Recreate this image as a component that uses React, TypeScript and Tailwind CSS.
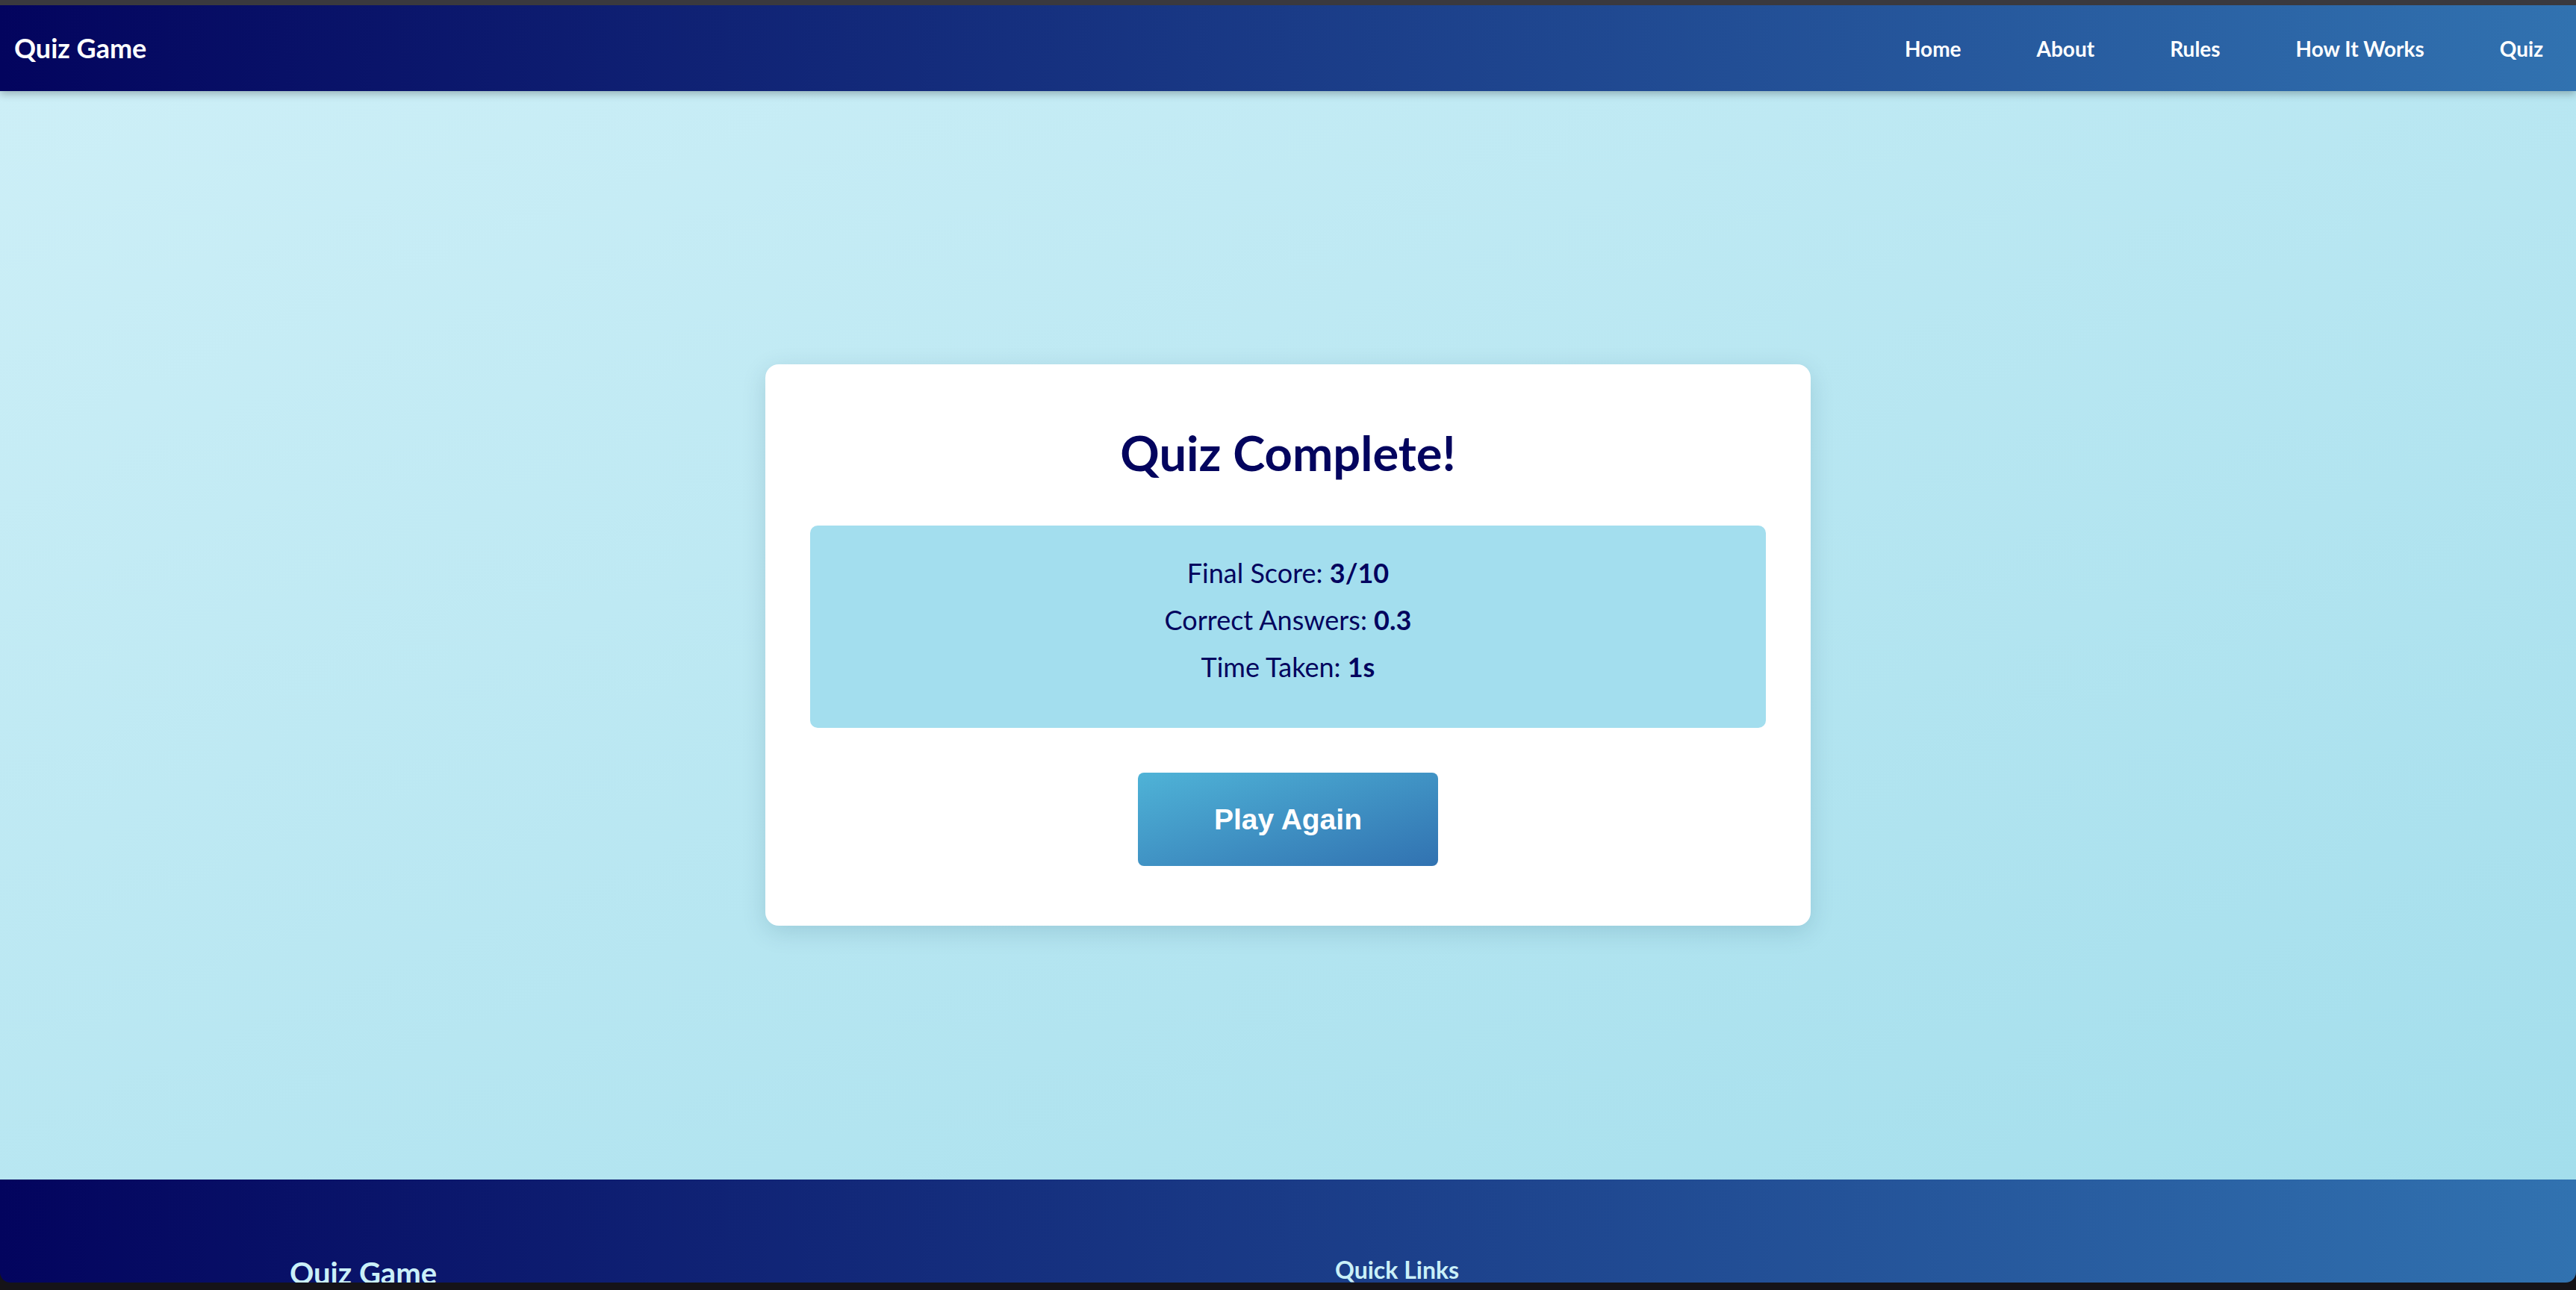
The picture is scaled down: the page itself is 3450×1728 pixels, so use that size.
const navLinks = ["Home", "About", "Rules", "How It Works", "Quiz"];

const stats = [
  { label: "Final Score", value: "3/10" },
  { label: "Correct Answers", value: "0.3" },
  { label: "Time Taken", value: "1s" },
];

export default function App() {
  return (
    <div className="h-[1728px] w-full overflow-hidden bg-[#151318] font-['Lato',sans-serif]">
      {/* window chrome */}
      <div className="h-[7px] bg-[#3a393e]" />

      <div className="h-[1711px] overflow-hidden rounded-b-[14px]">
        <header className="relative z-10 flex h-[115px] items-center justify-between bg-linear-to-r/srgb from-[#03045e] to-[#3172b0] pl-[19px] pr-[44px] shadow-[0_4px_10px_rgba(0,0,0,0.25)]">
          <h1 className="text-[36px] font-bold leading-[43px] text-white">Quiz Game</h1>
          <nav className="flex gap-[101px]">
            {navLinks.map((l) => (
              <a key={l} href="#" className="text-[28px] font-bold leading-[34px] text-white">
                {l}
              </a>
            ))}
          </nav>
        </header>

        <main className="flex h-[1458px] items-center justify-center bg-linear-to-br/srgb from-[#cdeff7] to-[#a3deec] pt-[26px]">
          <div className="flex w-[1400px] flex-col items-center rounded-[18px] bg-white px-[60px] pt-[80px] pb-[80px] shadow-[0_8px_32px_rgba(0,60,90,0.15)]">
            <h2 className="text-[65px] font-bold leading-[77px] text-[#03045e]">Quiz Complete!</h2>

            <div className="mt-[59px] w-full rounded-[10px] bg-[#a3deee] pt-[42px] pb-[40px] text-center text-[36px] leading-[42px] text-[#03045e]">
              {stats.map((s) => (
                <p key={s.label} className="mb-[21px]">
                  {s.label}: <strong className="font-bold">{s.value}</strong>
                </p>
              ))}
            </div>

            <button className="mt-[60px] rounded-[8px] bg-linear-to-br/srgb from-[#4fb3d7] to-[#3172b1] px-[102px] py-[40px] font-['Liberation_Sans',Arial,sans-serif] text-[39px] font-bold leading-[45px] text-white">
              Play Again
            </button>
          </div>
        </main>

        <footer className="h-[400px] bg-linear-to-r/srgb from-[#03045e] to-[#3172b0] pt-[102px] pl-[388px]">
          <div className="grid grid-cols-[1400px_1fr]">
            <div>
              <h3 className="text-[40px] font-bold leading-[46px] text-[#caf0f8]">Quiz Game</h3>
            </div>
            <div>
              <h3 className="text-[32px] font-bold leading-[38px] text-[#caf0f8]">Quick Links</h3>
            </div>
          </div>
        </footer>
      </div>
    </div>
  );
}
